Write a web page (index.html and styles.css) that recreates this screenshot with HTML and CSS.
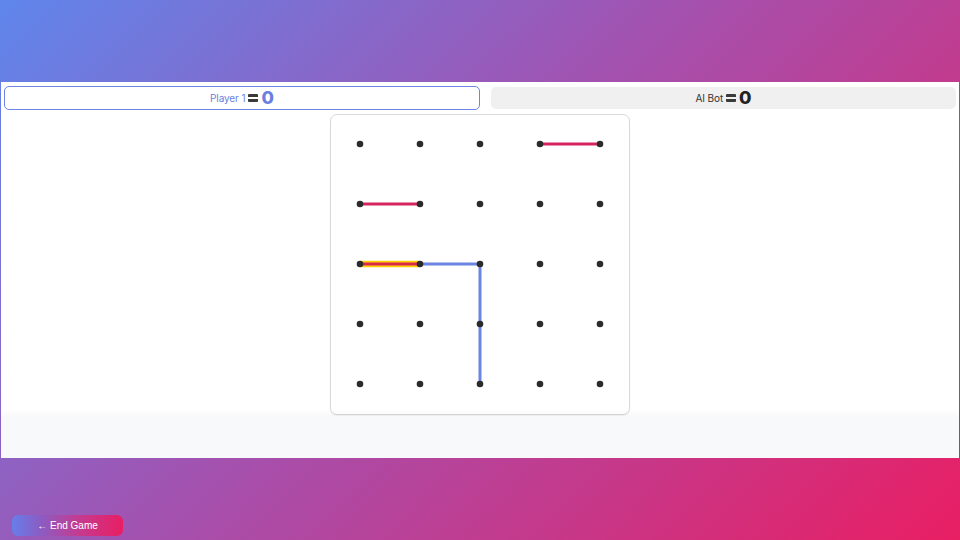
FILE: index.html
```html
<!DOCTYPE html>
<html>
<head>
<meta charset="utf-8">
<link rel="stylesheet" href="styles.css">
</head>
<body>
<div class="page">
  <div class="top-space"></div>
  <main class="panel">
    <div class="scores">
      <div class="score score-active">
        <span class="name">Player 1</span>
        <span class="eq"></span>
        <span class="num">0</span>
      </div>
      <div class="score score-ai">
        <span class="name">AI Bot</span>
        <span class="eq"></span>
        <span class="num">0</span>
      </div>
    </div>
    <div class="board-wrap">
      <div class="board">
        <svg width="298" height="298" viewBox="1 1 298 298">
          <line x1="30" y1="150" x2="90" y2="150" stroke="#ffd400" stroke-width="6.5"/>
          <line x1="210" y1="30" x2="270" y2="30" stroke="#d6245f" stroke-width="3"/>
          <line x1="30" y1="90" x2="90" y2="90" stroke="#d6245f" stroke-width="3"/>
          <line x1="30" y1="150" x2="90" y2="150" stroke="#d92a50" stroke-width="3"/>
          <line x1="90" y1="150" x2="150" y2="150" stroke="#6b85e2" stroke-width="3"/>
          <line x1="150" y1="150" x2="150" y2="210" stroke="#6b85e2" stroke-width="3"/>
          <line x1="150" y1="210" x2="150" y2="270" stroke="#6b85e2" stroke-width="3"/>
          <g fill="#2b2b2b">
            <circle cx="30" cy="30" r="3.3"/><circle cx="90" cy="30" r="3.3"/><circle cx="150" cy="30" r="3.3"/><circle cx="210" cy="30" r="3.3"/><circle cx="270" cy="30" r="3.3"/>
            <circle cx="30" cy="90" r="3.3"/><circle cx="90" cy="90" r="3.3"/><circle cx="150" cy="90" r="3.3"/><circle cx="210" cy="90" r="3.3"/><circle cx="270" cy="90" r="3.3"/>
            <circle cx="30" cy="150" r="3.3"/><circle cx="90" cy="150" r="3.3"/><circle cx="150" cy="150" r="3.3"/><circle cx="210" cy="150" r="3.3"/><circle cx="270" cy="150" r="3.3"/>
            <circle cx="30" cy="210" r="3.3"/><circle cx="90" cy="210" r="3.3"/><circle cx="150" cy="210" r="3.3"/><circle cx="210" cy="210" r="3.3"/><circle cx="270" cy="210" r="3.3"/>
            <circle cx="30" cy="270" r="3.3"/><circle cx="90" cy="270" r="3.3"/><circle cx="150" cy="270" r="3.3"/><circle cx="210" cy="270" r="3.3"/><circle cx="270" cy="270" r="3.3"/>
          </g>
        </svg>
      </div>
    </div>
    <div class="footer-bar"></div>
  </main>
  <div class="actions">
    <button class="end-btn">← End Game</button>
  </div>
</div>
</body>
</html>
```

FILE: styles.css
```css
html, body {
  margin: 0;
  padding: 0;
  height: 100%;
}
body {
  background: linear-gradient(135deg, #5f86ec 0%, #a352b0 45%, #e91e63 100%);
  font-family: "Inter", "Open Sans", sans-serif;
  overflow: hidden;
}
.page {
  display: flex;
  flex-direction: column;
  height: 540px;
}
.top-space {
  height: 82px;
}
.panel {
  margin-left: 1px;
  width: 958px;
  background: #ffffff;
  display: flex;
  flex-direction: column;
}
.scores {
  display: flex;
  padding: 4px 3px 0 3px;
  align-items: flex-start;
}
.score {
  display: flex;
  align-items: center;
  justify-content: center;
  gap: 3px;
  box-sizing: border-box;
  border-radius: 5px;
}
.score-active {
  width: 476px;
  height: 24px;
  border: 1.5px solid #6f84e4;
  color: #6b7fe0;
}
.score-ai {
  flex: 1;
  margin-left: 11px;
  margin-top: 1px;
  height: 22px;
  background: #f0f0f0;
  color: #333333;
}
.name {
  font-size: 10px;
  letter-spacing: -0.1px;
}
.eq {
  width: 10px;
  height: 8px;
  box-sizing: border-box;
  border-top: 3px solid #3a3a3a;
  border-bottom: 3px solid #3a3a3a;
  border-radius: 1px;
}
.num {
  font-size: 18px;
  font-weight: 800;
  line-height: 1;
  margin-top: -1px;
}
.score-active .num {
  color: #6b7fe0;
}
.score-ai .num {
  color: #222222;
}
.board-wrap {
  display: flex;
  justify-content: center;
  margin-top: 4px;
}
.board {
  width: 300px;
  height: 301px;
  box-sizing: border-box;
  border: 1px solid #d9d9d9;
  border-radius: 7px;
  background: #ffffff;
  box-shadow: 0 1px 2px rgba(0, 0, 0, 0.06);
}
.board svg {
  display: block;
}
.footer-bar {
  margin-top: 1px;
  height: 42px;
  background: #f8f9fa;
  box-shadow: 0 -3px 5px rgba(0, 0, 0, 0.03);
}
.actions {
  padding: 57px 0 0 12px;
}
.end-btn {
  width: 111px;
  height: 21px;
  border: none;
  border-radius: 6px;
  background: linear-gradient(90deg, #667eea 0%, #8a5dc4 25%, #c43b90 60%, #e91e63 100%);
  color: #ffffff;
  font-family: "Liberation Sans", Arial, sans-serif;
  font-size: 10px;
  padding: 0;
  display: flex;
  align-items: center;
  justify-content: center;
}
```
